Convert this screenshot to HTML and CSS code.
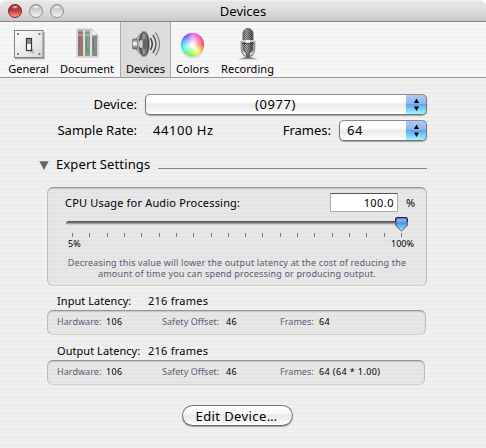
FILE: index.html
```html
<!DOCTYPE html>
<html lang="en">
<head>
<meta charset="utf-8">
<title>Devices</title>
<link rel="stylesheet" href="styles.css">
</head>
<body>
<div class="window">
  <header class="titlebar">
    <div class="lights"><i class="light close"></i><i class="light"></i><i class="light"></i></div>
    <h1>Devices</h1>
  </header>
  <nav class="toolbar">
    <a class="tool general">
      <svg width="32" height="34" viewBox="0 0 32 34">
        <defs><linearGradient id="plate" x2="1" y2="1"><stop stop-color="#fff"/><stop offset="1" stop-color="#d9d9d9"/></linearGradient></defs>
        <path d="M2 30.500h29V4" fill="none" stroke="#aaa" stroke-width="1.500"/>
        <rect x="1.500" y="2.500" width="28.500" height="27" fill="url(#plate)" stroke="#808080"/>
        <path d="M16 24l5 2v-4l-2-2z" fill="#bbb"/>
        <rect x="13.500" y="10.500" width="5" height="12" fill="#eee" stroke="#333" stroke-width="1.200"/>
        <path d="M14 11h4v5h-4z" fill="#888"/><path d="M14.500 16h3v6h-3z" fill="#fff"/>
        <g fill="#666"><circle cx="5" cy="6" r="1.100"/><circle cx="26.500" cy="6" r="1.100"/><circle cx="5" cy="26" r="1.100"/><circle cx="26.500" cy="26" r="1.100"/></g>
      </svg>
      <span>General</span>
    </a>
    <a class="tool document">
      <svg width="32" height="34" viewBox="0 0 32 34">
        <path d="M6 1h15l6 6v22H6z" fill="#ddd" stroke="#c4c4c4"/>
        <path d="M7 2h5v26H7z" fill="#a07375"/><path d="M14 2h5v26h-5z" fill="#8b9b89"/><path d="M21 8l5-1v21h-5z" fill="#858993"/>
        <path d="M21 1l6 6h-6z" fill="#f4f4f4" stroke="#bbb" stroke-width=".5"/>
        <path d="M7 3h5M7 7h5M14 3h5M14 7h5" stroke="#ddd" stroke-width=".7"/>
        <path d="M8.500 10v11M15.500 10v11M22.500 10v11" stroke="#555" stroke-width=".8" stroke-dasharray="1 1"/>
        <path d="M9 22v3M16 20v5M18 21v4M23 20v5" stroke="#4b9a50" stroke-width=".9"/>
      </svg>
      <span>Document</span>
    </a>
    <a class="tool selected">
      <svg width="32" height="34" viewBox="0 0 32 34">
        <defs>
          <linearGradient id="cone"><stop stop-color="#333"/><stop offset=".5" stop-color="#999"/><stop offset="1" stop-color="#444"/></linearGradient>
          <linearGradient id="magnet" x2="0" y2="1"><stop stop-color="#666"/><stop offset=".45" stop-color="#fff"/><stop offset="1" stop-color="#555"/></linearGradient>
        </defs>
        <path d="M6 11L13 3v26l-7-8z" fill="url(#magnet)" stroke="#888"/>
        <rect x="2.500" y="11" width="5" height="10" rx="1" fill="url(#magnet)" stroke="#777" stroke-width=".8"/>
        <ellipse cx="14" cy="16" rx="5.500" ry="13" fill="url(#cone)" stroke="#aaa"/>
        <ellipse cx="14" cy="16" rx="4.500" ry="11.500" fill="none" stroke="#333" stroke-width=".7"/>
        <ellipse cx="11" cy="16" rx="2" ry="4" fill="#eee" opacity=".8"/>
        <ellipse cx="15" cy="16" rx="2.500" ry="5.500" fill="#666"/>
        <g fill="none"><path d="M20.500 10q3.500 6 0 12" stroke="#333" stroke-width="1.400"/><path d="M23 7q6 9 0 18" stroke="#555" stroke-width="1.400"/><path d="M25.500 4.500q8 11.500 0 23" stroke="#808080" stroke-width="1.300"/></g>
      </svg>
      <span>Devices</span>
    </a>
    <a class="tool colors">
      <div class="wheel-box"><div class="wheel"></div></div>
      <span>Colors</span>
    </a>
    <a class="tool recording">
      <svg width="32" height="34" viewBox="0 0 32 34">
        <defs>
          <linearGradient id="mic"><stop stop-color="#777"/><stop offset=".35" stop-color="#bbb"/><stop offset="1" stop-color="#444"/></linearGradient>
          <pattern id="mesh" width="2" height="2" patternUnits="userSpaceOnUse"><path d="M0 0h1v1H0zM1 1h1v1H1z" fill="#333"/></pattern>
        </defs>
        <path d="M6 31.500h20l-4-2H10z" fill="#bbb"/>
        <path d="M9.500 13v7q0 6 4 8h5q4-2 4-8v-7" fill="none" stroke="#999" stroke-width="1.800"/>
        <path d="M14 24h4v5l4 1.500H10l4-1.500z" fill="#666"/>
        <rect x="11" y="0.500" width="10" height="25" rx="5" fill="url(#mic)" stroke="#666"/>
        <rect x="11.500" y="1" width="9" height="24" rx="4.500" fill="url(#mesh)" opacity=".65"/>
        <path d="M10 12h12v2H10z" fill="#c8c8c8"/><path d="M14 12h4v4h-4z" fill="#eee"/>
        <path d="M10 15.500h12" stroke="#444"/>
      </svg>
      <span>Recording</span>
    </a>
  </nav>
  <main>
    <div class="row device-row">
      <label class="lead">Device:</label>
      <div class="popup wide"><span class="digits">(0977)</span>
        <b class="arrows"><svg width="7" height="14" viewBox="0 0 7 14"><path d="M3.500.5L6 5H1zM3.500 13L6 8.500H1z"/></svg></b>
      </div>
    </div>
    <div class="row rate-row">
      <label class="lead">Sample Rate:</label>
      <span class="rate digits">44100 Hz</span>
      <label class="frames-label">Frames:</label>
      <div class="popup small"><span class="digits">64</span>
        <b class="arrows"><svg width="7" height="14" viewBox="0 0 7 14"><path d="M3.500.5L6 5H1zM3.500 13L6 8.500H1z"/></svg></b>
      </div>
    </div>
    <div class="row expert">
      <svg class="triangle" width="10" height="9" viewBox="0 0 10 9"><path d="M.3.300h9.400L5 9z" fill="#666"/></svg>
      <h2>Expert Settings</h2><i class="rule"></i>
    </div>
    <section class="group cpu">
      <div class="cpu-head"><label>CPU Usage for Audio Processing:</label><div class="field">100.0</div><span class="unit">%</span></div>
      <div class="slider"><div class="track"></div>
        <svg class="thumb" width="13" height="15" viewBox="0 0 13 15">
          <defs><linearGradient id="aqua" x2="0" y2="1"><stop stop-color="#9ab8ee"/><stop offset=".35" stop-color="#6c9fe4"/><stop offset=".38" stop-color="#428be0"/><stop offset="1" stop-color="#a8f2ff"/></linearGradient></defs>
          <path d="M2.500.7h8q1.800 0 1.800 1.800v6L6.500 14 .7 8.500v-6Q.7.700 2.500.7z" fill="url(#aqua)" stroke="#3c5876"/>
          <path d="M.7 5V2.500Q.7.700 2.500.7h8q1.800 0 1.800 1.800V5" fill="none" stroke="#171c83" stroke-width="1.200"/>
        </svg>
      </div>
      <div class="ticks"><i></i><i></i><i></i><i></i><i></i><i></i><i></i><i></i><i></i><i></i><i></i><i></i><i></i><i></i><i></i><i></i><i></i><i></i><i></i><i></i></div>
      <div class="scale"><span>5%</span><span>100%</span></div>
      <p>Decreasing this value will lower the output latency at the cost of reducing the<br>amount of time you can spend processing or producing output.</p>
    </section>
    <div class="latency"><span>Input Latency:</span><span class="value">216 frames</span></div>
    <section class="group stats input">
      <label>Hardware:</label><span>106</span><label>Safety Offset:</label><span>46</span><label>Frames:</label><span>64</span>
    </section>
    <div class="latency"><span>Output Latency:</span><span class="value">216 frames</span></div>
    <section class="group stats output">
      <label>Hardware:</label><span>106</span><label>Safety Offset:</label><span>46</span><label>Frames:</label><span>64 (64 * 1.00)</span>
    </section>
    <button class="edit">Edit Device…</button>
  </main>
</div>
</body>
</html>
```
FILE: styles.css
```css
* { box-sizing: border-box; }
body {
  margin: 0;
  background: #fff;
  color: #000;
  font: 13px/18px "Noto Sans", sans-serif;
  white-space: nowrap;
}
h1, h2, p { margin: 0; font-size: 13px; font-weight: 400; }
.window {
  width: 486px;
  height: 448px;
  border-radius: 7px 7px 0 0;
  overflow: hidden;
  background: repeating-linear-gradient(#ececec 0 2px, #f0f0f0 2px 4px);
}
.titlebar {
  display: grid;
  grid-template-columns: 92px 1fr 92px;
  height: 22px;
  border-bottom: 1px solid #8a8a8a;
  background: linear-gradient(#f3f3f3 0, #e5e5e5 2px, #dedede 50%, #c8c8c8);
}
.titlebar h1 { text-align: center; line-height: 22px; }
.lights { display: flex; gap: 7px; padding: 4px 0 0 8px; }
.light {
  width: 14px;
  height: 14px;
  border: 1px solid #8c8c8c;
  border-radius: 50%;
  background: radial-gradient(ellipse 4px 2px at 50% 2px, #fff, #fff0), linear-gradient(#b4b4b4, #d4d4d4 50%, #f5f5f5);
}
.close {
  border-color: #6b2926;
  background: radial-gradient(ellipse 4px 2px at 50% 2px, #fffc, #fff0), linear-gradient(#8a2526, #cf3c3e 50%, #ff9b92);
}
.toolbar {
  display: flex;
  height: 56px;
  padding-left: 3px;
  border-bottom: 1px solid #999;
  background: repeating-linear-gradient(#f7f7f7 0 2px, #f3f3f3 2px 4px);
  font-size: 11px;
}
.tool { display: flex; flex-direction: column; align-items: center; padding-top: 6px; line-height: 14px; }
.tool svg, .wheel-box { flex: none; width: 32px; height: 34px; }
.general { width: 51px; }
.general svg { margin-left: 1px; }
.document { width: 66px; }
.selected { width: 51px; border: solid #aaa; border-width: 0 1px; background: #dcdcdc; }
.colors { width: 43px; }
.recording { width: 67px; letter-spacing: .05px; }
.wheel-box { padding: 5px 4px; }
.wheel {
  width: 23px;
  height: 23px;
  border-radius: 50%;
  box-shadow: inset 0 0 1px #0007, 0 2px 2px #0002;
  background: radial-gradient(#fff 5%, #fff0 70%), conic-gradient(#ee60ff, #ff4cab, #ff4050 90deg, #ffa53c, #f4ff55 145deg, #6bff50 190deg, #42f5e0 250deg, #35a9ff 290deg, #6250ff 325deg, #ee60ff);
}
main { display: flex; flex-direction: column; padding: 16px 59px 0 39px; }
.row { display: flex; flex: none; height: 21px; line-height: 21px; }
.lead { width: 98px; text-align: right; }
.digits { letter-spacing: .55px; }
.popup {
  display: flex;
  justify-content: space-between;
  height: 21px;
  line-height: 19px;
  border: 1px solid #777;
  border-top-color: #8c8c8c;
  border-radius: 5px;
  overflow: hidden;
  background: linear-gradient(#fff 0 35%, #f1f1f1 45%, #ebebeb 55%, #fff);
  box-shadow: 0 1px 1px #0005;
}
.wide { width: 282px; margin-left: 8px; padding-left: 109px; }
.small { width: 88px; margin-left: 8px; padding-left: 7px; }
.arrows {
  display: flex;
  align-items: center;
  justify-content: center;
  width: 21px;
  margin: -1px -1px -1px 0;
  border: solid #294d86;
  border-width: 1px 1px 1px 0;
  border-top-color: #191970;
  border-bottom-color: #426b87;
  border-radius: 0 5px 5px 0;
  background: linear-gradient(#b0caf3, #8ab6ec 45%, #5ca5ee 50%, #a5f4ff);
}
.rate-row { margin-top: 5px; }
.rate { width: 82px; margin-left: 16px; }
.frames-label { width: 100px; margin-left: -4px; text-align: right; }
.expert { margin-top: 13px; align-items: center; }
.triangle { margin: 2px 7px 0 0; }
.expert h2 { letter-spacing: .13px; }
.rule { flex: 1; height: 1px; margin: 7px 0 0 8px; background: #888; }
.group {
  flex: none;
  margin-left: 8px;
  border: 1px solid #bbb;
  border-top-color: #969696;
  border-bottom-color: #d0d0d0;
  border-radius: 6px;
  background: repeating-linear-gradient(#e3e3e3 0 2px, #e7e7e7 2px 4px);
  box-shadow: inset 0 1px 1px #0002;
}
.cpu { width: 380px; height: 99px; margin-top: 12px; padding: 5px 11px 0 17px; }
.cpu-head { display: flex; height: 19px; font-size: 11px; line-height: 20px; letter-spacing: .18px; }
.cpu-head label { flex: none; width: 265px; }
.field {
  flex: none;
  width: 68px;
  height: 19px;
  padding-right: 3px;
  border: 1px solid #aaa;
  border-top: 1px solid #555;
  background: #fff;
  text-align: right;
  line-height: 18px;
  letter-spacing: .45px;
}
.unit { margin-left: 8px; }
.slider { display: flex; align-items: center; height: 15px; margin: 5px 0 0 1px; position: relative; }
.track {
  width: 341px;
  height: 5px;
  margin-top: -2px;
  border-radius: 3px;
  background: linear-gradient(#505050, #7c7c7c 40%, #c0c0c0 60%, #f3f3f3);
}
.thumb { position: absolute; left: 329px; top: 0; }
.ticks { display: flex; justify-content: space-between; width: 330px; height: 4px; margin: 1px 0 0 7px; }
.ticks i { width: 1px; background: #777; }
.scale { display: flex; justify-content: space-between; height: 13px; margin: 0 1px 0 3px; font-size: 9px; line-height: 13px; }
.cpu p { width: 346px; margin: 7px 0 0 -1px; color: #566074; text-align: center; font-size: 9px; line-height: 11px; letter-spacing: .165px; }
.latency { display: flex; flex: none; height: 17px; margin: 7px 0 0 18px; font-size: 11px; line-height: 16px; letter-spacing: .05px; }
.latency > :first-child { width: 91px; }
.latency .value { letter-spacing: .24px; }
.stats {
  display: grid;
  grid-template-columns: 49px 56px 64px 54px 39px auto;
  width: 379px;
  height: 25px;
  padding-left: 9px;
  font-size: 9px;
  line-height: 22px;
}
.stats label { color: #566074; letter-spacing: .05px; }
.stats span { letter-spacing: .4px; }
.input { margin-bottom: 1px; }
.output { width: 378px; }
.edit {
  flex: none;
  width: 111px;
  height: 21px;
  margin: 20px 0 0 143px;
  padding: 0 2px 0 0;
  border: 1px solid #777;
  border-bottom-color: #666;
  border-radius: 11px;
  background: linear-gradient(#fff 0, #f8f8f8 40%, #e9e9e9 50%, #fff);
  box-shadow: 0 1px 1px #0005;
  color: #000;
  font: 13px/18px "Noto Sans", sans-serif;
  letter-spacing: .4px;
}
```
